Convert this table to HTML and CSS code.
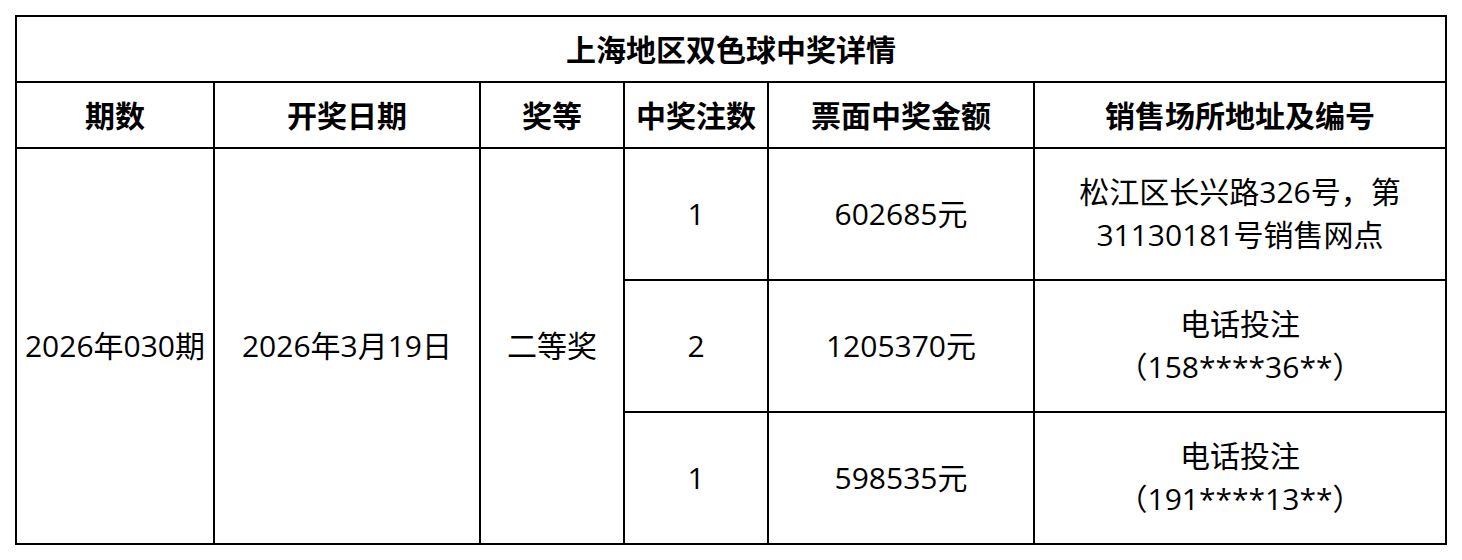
FILE: index.html
```html
<!DOCTYPE html>
<html lang="zh-CN">
<head>
<meta charset="utf-8">
<title>上海地区双色球中奖详情</title>
<link rel="stylesheet" href="styles.css">
</head>
<body>
<table class="prize-table">
  <colgroup>
    <col class="c-period">
    <col class="c-date">
    <col class="c-level">
    <col class="c-count">
    <col class="c-amount">
    <col class="c-place">
  </colgroup>
  <thead>
    <tr class="title-row">
      <th colspan="6" class="title">上海地区双色球中奖详情</th>
    </tr>
    <tr class="head-row">
      <th>期数</th>
      <th>开奖日期</th>
      <th>奖等</th>
      <th>中奖注数</th>
      <th>票面中奖金额</th>
      <th>销售场所地址及编号</th>
    </tr>
  </thead>
  <tbody>
    <tr class="data-row">
      <td rowspan="3">2026年030期</td>
      <td rowspan="3">2026年3月19日</td>
      <td rowspan="3">二等奖</td>
      <td>1</td>
      <td>602685元</td>
      <td>松江区长兴路326号，第<br>31130181号销售网点</td>
    </tr>
    <tr class="data-row">
      <td>2</td>
      <td>1205370元</td>
      <td>电话投注<br>（158****36**）</td>
    </tr>
    <tr class="data-row">
      <td>1</td>
      <td>598535元</td>
      <td>电话投注<br>（191****13**）</td>
    </tr>
  </tbody>
</table>
</body>
</html>
```
FILE: styles.css
```css
html, body {
  margin: 0;
  padding: 0;
  background: #ffffff;
}

body {
  padding: 15px;
  font-family: "Open Sans", "Noto Sans CJK SC", sans-serif;
  color: #000000;
  text-spacing-trim: space-all;
}

.prize-table {
  table-layout: fixed;
  border-collapse: separate;
  border-spacing: 0;
  width: 1432px;
  border-left: 2px solid #000;
  border-top: 2px solid #000;
}

.c-period { width: 198px; }
.c-date { width: 266px; }
.c-level { width: 144px; }
.c-count { width: 144px; }
.c-amount { width: 266px; }
.c-place { width: 412px; }

.prize-table th,
.prize-table td {
  border-right: 2px solid #000;
  border-bottom: 2px solid #000;
  padding: 0;
  text-align: center;
  vertical-align: middle;
  box-sizing: border-box;
}

.prize-table th {
  font-family: "Noto Sans CJK SC", sans-serif;
  font-weight: 700;
  font-size: 30px;
  line-height: 40px;
  padding-bottom: 2px;
}

.title-row,
.head-row {
  height: 66px;
}

.data-row {
  height: 132px;
}

.prize-table td {
  font-size: 30px;
  line-height: 43px;
  font-weight: 400;
  padding-bottom: 2px;
}
```
